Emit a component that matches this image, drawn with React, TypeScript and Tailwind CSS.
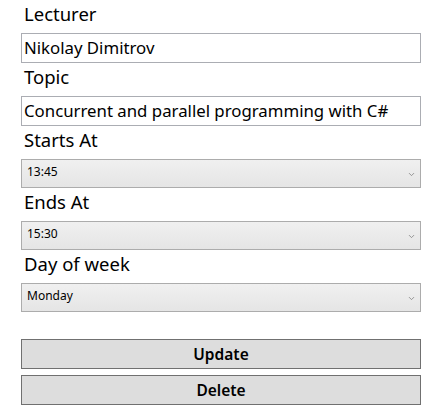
import { ChevronDown } from 'lucide-react'

const font = { fontFamily: '"Noto Sans", "Open Sans", sans-serif' }

function Label({ text }: { text: string }) {
  return <div className="h-[33px] pl-[3px] pt-[2px] text-[18.5px] leading-[24px] text-black">{text}</div>
}

function TextBox({ value }: { value: string }) {
  return (
    <div className="h-[30px] border border-[#abadb3] bg-white pl-[2px] text-[16.8px] leading-[27px] text-black">
      {value}
    </div>
  )
}

function Combo({ value }: { value: string }) {
  return (
    <div className="flex h-[29px] items-start justify-between border border-[#acacac] bg-gradient-to-b from-[#f0f0f0] to-[#e5e5e5] pl-[5px] pr-[4px]">
      <span className="pt-[4px] text-[12px] leading-[16px] text-black">{value}</span>
      <ChevronDown size={9} strokeWidth={2} className="mt-[10px] text-[#7a7a7a]" />
    </div>
  )
}

function Btn({ label }: { label: string }) {
  return (
    <button className="h-[30px] w-full border border-[#707070] bg-[#dddddd] text-[15.5px] font-semibold leading-[26px] text-black">
      {label}
    </button>
  )
}

export default function App() {
  return (
    <div className="h-[418px] w-[436px] bg-white" style={font}>
      <div className="flex w-[421px] flex-col pl-[21px]">
        <Label text="Lecturer" />
        <TextBox value="Nikolay Dimitrov" />
        <Label text="Topic" />
        <TextBox value="Concurrent and parallel programming with C#" />
        <Label text="Starts At" />
        <Combo value="13:45" />
        <Label text="Ends At" />
        <Combo value="15:30" />
        <Label text="Day of week" />
        <Combo value="Monday" />
        <div className="h-[27px]" />
        <div className="flex flex-col gap-[6px]">
          <Btn label="Update" />
          <Btn label="Delete" />
        </div>
      </div>
    </div>
  )
}
